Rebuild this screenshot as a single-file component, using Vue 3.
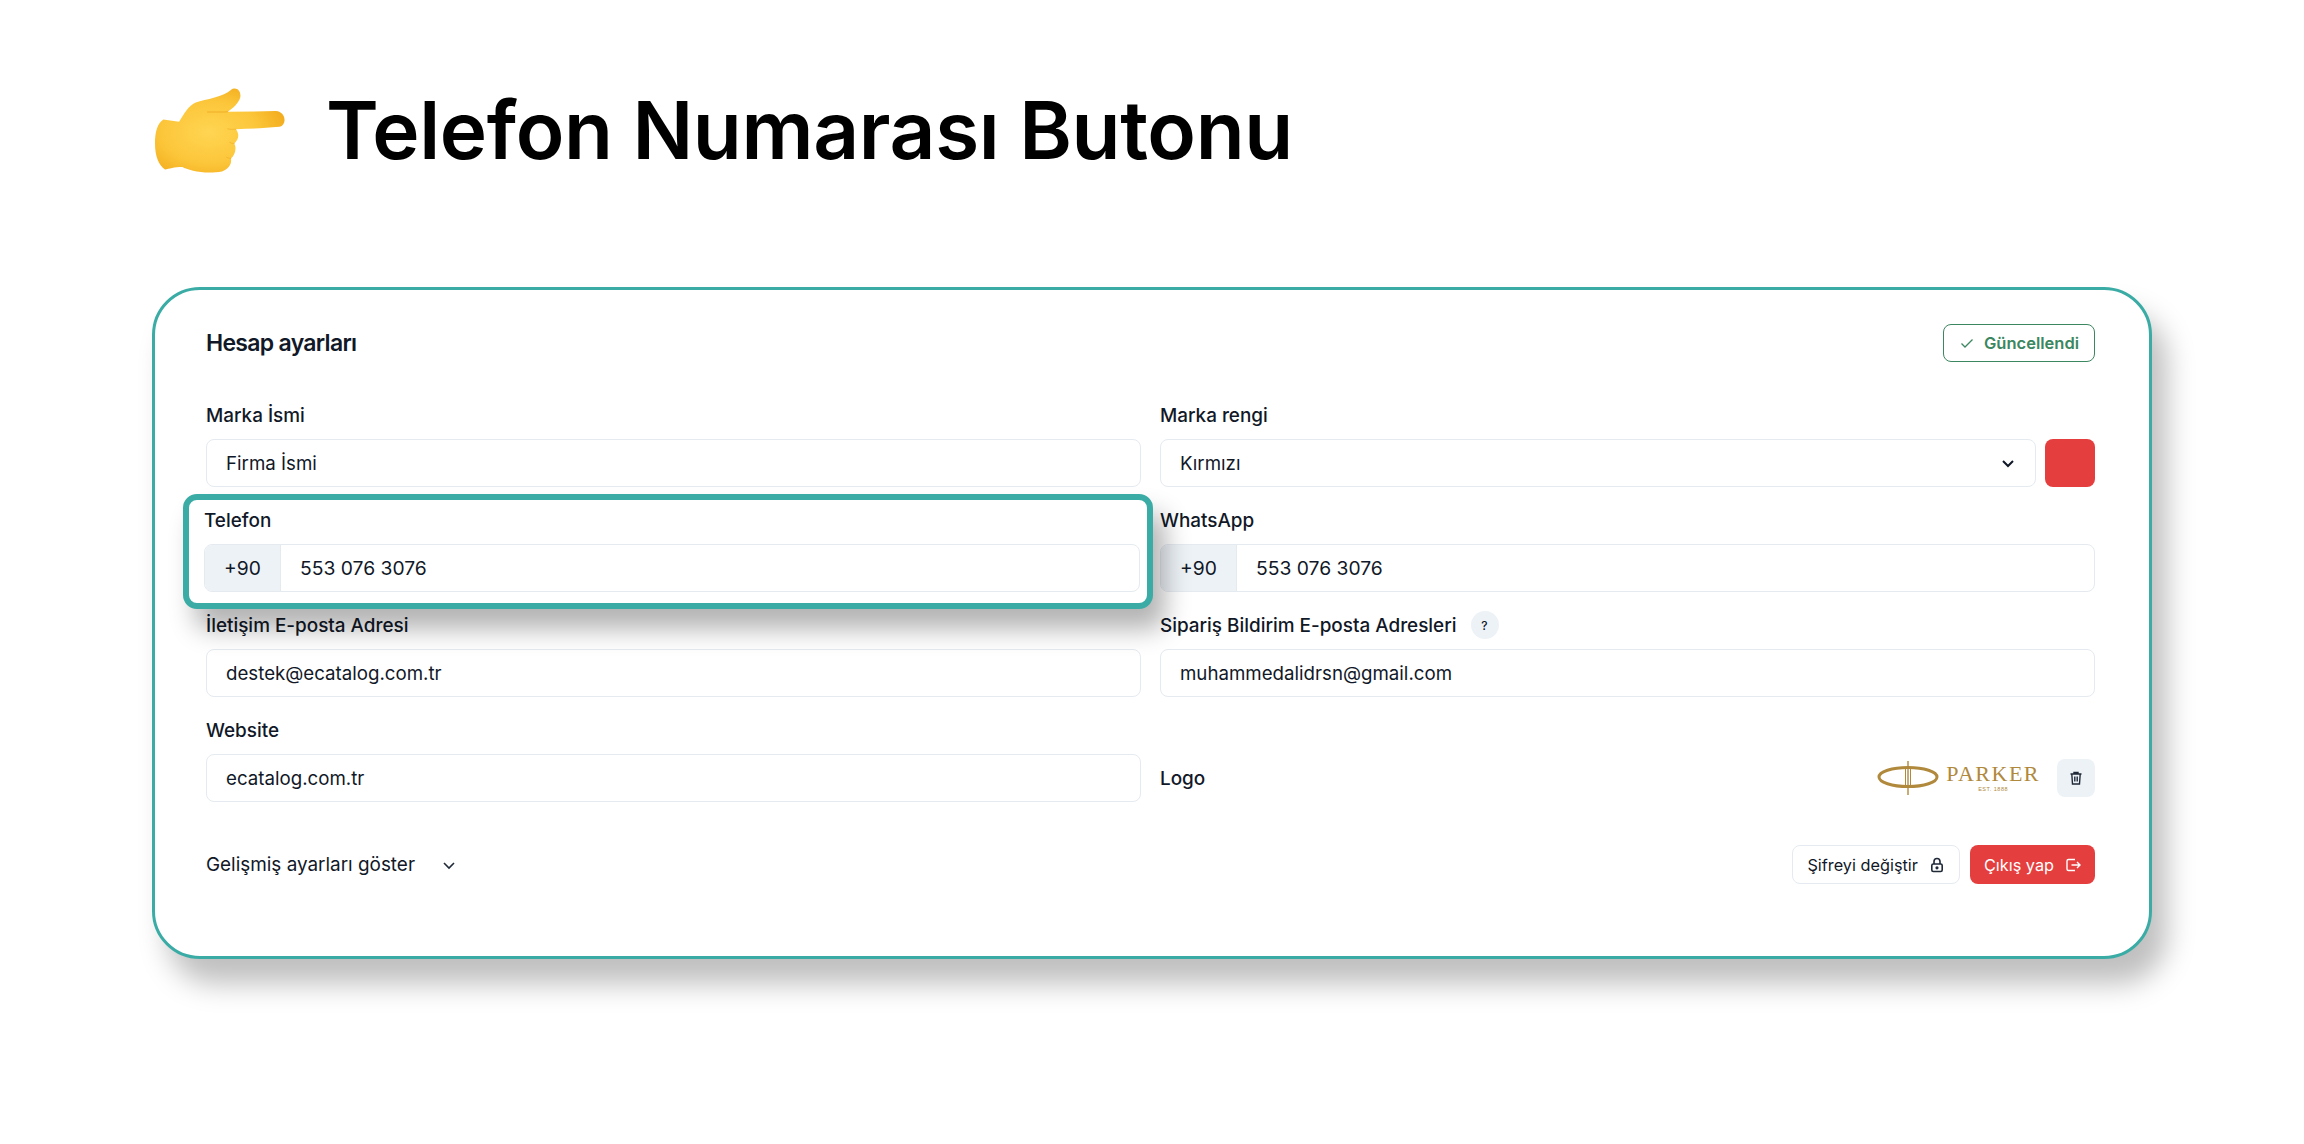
<script setup>
const gold = '#b0893c'
</script>

<template>
  <main class="page">
    <header class="title-row">
      <svg class="hand" viewBox="78 84 392 254" width="131" height="85" aria-hidden="true">
        <defs>
          <radialGradient id="handFill" cx="0.42" cy="0.52" r="0.62">
            <stop offset="0" stop-color="#ffd552" />
            <stop offset="0.6" stop-color="#fcc63a" />
            <stop offset="1" stop-color="#f2ab1c" />
          </radialGradient>
        </defs>
        <path fill="url(#handFill)" d="M103 178 L150 185 C165 160 180 135 200 127 C230 118 285 110 305 90 C320 78 337 92 333 112 C328 130 310 145 295 155 L440 153 C470 155 474 195 450 200 C400 205 360 205 320 207 C332 222 328 240 315 250 C324 265 316 285 305 295 C310 315 290 336 260 336 C215 340 175 328 160 320 C135 320 120 325 108 328 C90 315 78 290 78 250 C78 215 85 190 103 178 Z" />
        <path fill="none" stroke="#f0ae24" stroke-width="3" stroke-linecap="round" d="M235 156 C255 156 280 156 296 155" />
        <path fill="none" stroke="#f0ae24" stroke-width="2" stroke-linecap="round" d="M320 207 C310 208 302 208 296 206 M315 250 C310 250 306 249 302 247 M305 295 C300 294 296 293 292 291" />
      </svg>
      <h1>Telefon Numarası Butonu</h1>
    </header>

    <section class="card">
      <div class="card-head">
        <h2>Hesap ayarları</h2>
        <span class="saved">
          <svg viewBox="0 0 16 16" width="16" height="16" fill="none" stroke="#3b8760" stroke-width="1.3"><path d="M2.5 8.5 L6 12 L13.5 4.5" /></svg>
          Güncellendi
        </span>
      </div>

      <div class="grid">
        <div class="field">
          <label>Marka İsmi</label>
          <div class="input">Firma İsmi</div>
        </div>
        <div class="field">
          <label>Marka rengi</label>
          <div class="select-row">
            <div class="input select">
              <span>Kırmızı</span>
              <svg viewBox="0 0 16 16" width="16" height="16" fill="none" stroke="#111827" stroke-width="2"><path d="M3 6 L8 11 L13 6" /></svg>
            </div>
            <span class="swatch"></span>
          </div>
        </div>

        <div class="field highlighted">
          <label>Telefon</label>
          <div class="input phone"><span class="prefix">+90</span><span class="num">553 076 3076</span></div>
        </div>
        <div class="field">
          <label>WhatsApp</label>
          <div class="input phone"><span class="prefix">+90</span><span class="num">553 076 3076</span></div>
        </div>

        <div class="field">
          <label>İletişim E-posta Adresi</label>
          <div class="input">destek@ecatalog.com.tr</div>
        </div>
        <div class="field">
          <label>Sipariş Bildirim E-posta Adresleri <span class="help">?</span></label>
          <div class="input">muhammedalidrsn@gmail.com</div>
        </div>

        <div class="field">
          <label>Website</label>
          <div class="input">ecatalog.com.tr</div>
        </div>
        <div class="logo-field">
          <span class="logo-label">Logo</span>
          <div class="logo-right">
            <div class="parker">
              <svg viewBox="0 0 64 36" width="64" height="36" fill="none" :stroke="gold">
                <ellipse cx="32" cy="17" rx="29" ry="9.5" stroke-width="3" />
                <path d="M32 1 V35" stroke-width="1.4" />
                <path d="M29.5 8 V26 M34.5 8 V26" stroke-width="1" />
              </svg>
              <div class="parker-text">
                <span class="brand">PARKER</span>
                <span class="est">EST. 1888</span>
              </div>
            </div>
            <button class="trash">
              <svg viewBox="0 0 16 16" width="16" height="16" fill="none" stroke="#1f2937" stroke-width="1.4"><path d="M2.5 4 H13.5 M6 4 V2.5 H10 V4 M3.8 4 L4.5 14 H11.5 L12.2 4 M6.8 6.5 V11.5 M9.2 6.5 V11.5" /></svg>
            </button>
          </div>
        </div>
      </div>

      <div class="card-foot">
        <div class="advanced">
          <span>Gelişmiş ayarları göster</span>
          <svg viewBox="0 0 16 16" width="16" height="16" fill="none" stroke="#1f2937" stroke-width="1.6"><path d="M3 6 L8 11 L13 6" /></svg>
        </div>
        <div class="actions">
          <button class="btn light">
            Şifreyi değiştir
            <svg viewBox="0 0 16 16" width="16" height="16" fill="none" stroke="#1f2937" stroke-width="1.6"><rect x="2.8" y="7" width="10.4" height="7.5" rx="1.5" /><path d="M5 7 V4.5 A3 3 0 0 1 11 4.5 V7" /><circle cx="8" cy="10.8" r="0.8" fill="#1f2937" /></svg>
          </button>
          <button class="btn red">
            Çıkış yap
            <svg viewBox="0 0 16 16" width="16" height="16" fill="none" stroke="#fff" stroke-width="1.4"><path d="M10 2.5 H3.5 A1.5 1.5 0 0 0 2 4 V12 A1.5 1.5 0 0 0 3.5 13.5 H10 M6.5 8 H15 M12 5 L15 8 L12 11" /></svg>
          </button>
        </div>
      </div>
    </section>
  </main>
</template>

<style>
html, body { background: #fff; }
</style>

<style scoped>
.page {
  width: 2304px;
  height: 1144px;
  box-sizing: border-box;
  padding: 87px 152px 0;
  font-family: Inter, "Liberation Sans", sans-serif;
  color: #111827;
  overflow: hidden;
  background: #fff;
}
.title-row {
  display: flex;
  align-items: center;
  gap: 40px;
  height: 86px;
  margin-left: 3px;
}
h1 {
  margin: 0;
  font-size: 80px;
  line-height: 86px;
  font-weight: 600;
  letter-spacing: -0.33px;
  color: #000;
  white-space: nowrap;
}
.card {
  margin-top: 114px;
  width: 2000px;
  height: 672px;
  box-sizing: border-box;
  border: 3px solid #3aaca5;
  border-radius: 48px;
  padding: 34px 54px 0 51px;
  background: #fff;
  box-shadow: 15px 25px 28px rgba(0, 0, 0, 0.25);
}
.card-head {
  display: flex;
  justify-content: space-between;
  align-items: center;
  height: 38px;
}
h2 {
  margin: 0;
  font-size: 23px;
  font-weight: 600;
  letter-spacing: -0.7px;
}
.saved {
  display: flex;
  align-items: center;
  gap: 9px;
  box-sizing: border-box;
  height: 38px;
  width: 152px;
  padding-left: 15px;
  border: 1.5px solid #3b8760;
  border-radius: 8px;
  color: #3b8760;
  font-size: 16.5px;
  font-weight: 600;
}
.grid {
  display: grid;
  grid-template-columns: 935px 935px;
  grid-auto-rows: 84px;
  column-gap: 19px;
  row-gap: 21px;
  margin-top: 41px;
}
.field {
  display: flex;
  flex-direction: column;
  gap: 12px;
  min-width: 0;
}
label {
  display: flex;
  align-items: center;
  height: 24px;
  font-size: 18.9px;
  font-weight: 450;
  gap: 14px;
  white-space: nowrap;
}
.input {
  box-sizing: border-box;
  height: 48px;
  display: flex;
  align-items: center;
  padding: 0 19px;
  border: 1.5px solid #e5eaf1;
  border-radius: 8px;
  font-size: 18.7px;
  background: #fff;
}
.select-row {
  display: flex;
  gap: 9px;
}
.select {
  flex: 1;
  justify-content: space-between;
  padding-right: 19px;
}
.swatch {
  width: 50px;
  height: 48px;
  background: #e53e3e;
  border-radius: 8px;
}
.phone {
  padding: 0;
  overflow: hidden;
  font-size: 19.3px;
}
.prefix {
  display: flex;
  align-items: center;
  justify-content: center;
  width: 75px;
  height: 100%;
  background: #edf2f7;
  border-right: 1.5px solid #e5eaf1;
}
.num {
  padding-left: 19px;
}
.highlighted {
  position: relative;
  z-index: 1;
  height: 115px;
  box-sizing: border-box;
  margin: -14px -12px -17px -23px;
  padding: 8px 7px 11px 15px;
  border: 6px solid #3aaca5;
  border-radius: 14px;
  background: #fff;
  box-shadow: 12px 20px 26px rgba(0, 0, 0, 0.3);
}
.help {
  display: inline-flex;
  align-items: center;
  justify-content: center;
  width: 28px;
  height: 28px;
  border-radius: 50%;
  background: #edf2f7;
  font-size: 12px;
}
.logo-field {
  display: flex;
  justify-content: space-between;
  align-items: center;
  height: 48px;
  align-self: end;
}
.logo-label {
  font-size: 18.9px;
  font-weight: 450;
}
.logo-right {
  display: flex;
  align-items: center;
  gap: 17px;
}
.parker {
  display: flex;
  align-items: center;
  gap: 6px;
}
.parker-text {
  display: flex;
  flex-direction: column;
  align-items: center;
  color: #b0893c;
  font-family: "Liberation Serif", serif;
}
.brand {
  font-size: 22px;
  line-height: 22px;
  letter-spacing: 1.5px;
}
.est {
  font-family: "Liberation Sans", sans-serif;
  font-size: 5.5px;
  line-height: 8px;
  letter-spacing: 0.5px;
}
.trash {
  width: 38px;
  height: 38px;
  display: flex;
  align-items: center;
  justify-content: center;
  border: 0;
  padding: 0;
  border-radius: 8px;
  background: #edf2f7;
}
.card-foot {
  display: flex;
  justify-content: space-between;
  align-items: center;
  margin-top: 43px;
  height: 39px;
}
.advanced {
  display: flex;
  align-items: center;
  gap: 26px;
  font-size: 18.9px;
}
.actions {
  display: flex;
  gap: 10px;
}
.btn {
  display: flex;
  align-items: center;
  gap: 11px;
  box-sizing: border-box;
  height: 39px;
  padding: 0 14px;
  border-radius: 8px;
  font-family: inherit;
  font-size: 16.3px;
  font-weight: 400;
}
.btn.light {
  background: #fff;
  border: 1.5px solid #e5eaf1;
  color: #111827;
}
.btn.red {
  background: #e53e3e;
  border: 0;
  color: #fff;
}
</style>
